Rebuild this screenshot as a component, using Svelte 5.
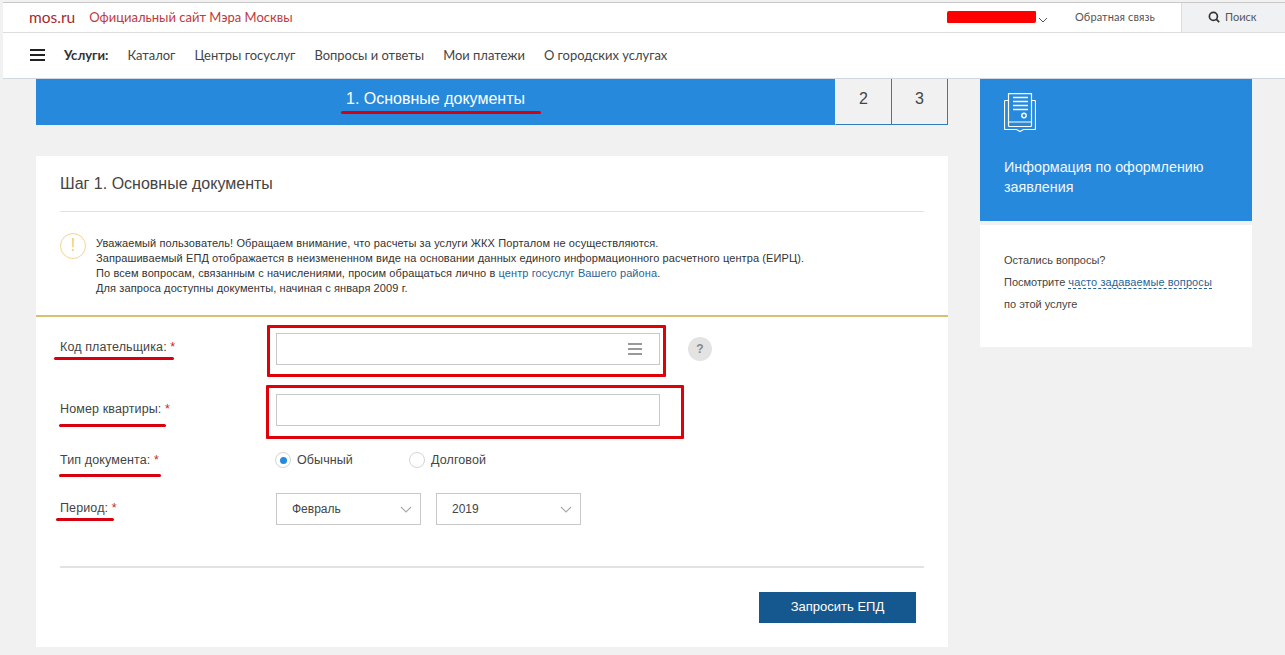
<script lang="ts">
  const navLinks = ['Каталог', 'Центры госуслуг', 'Вопросы и ответы', 'Мои платежи', 'О городских услугах'];

  // red marker strokes drawn over the page
  const strokes = [
    { x: 341, y: 111, w: 200, h: 3 },
    { x: 54, y: 357, w: 120, h: 3 },
    { x: 59, y: 424, w: 107, h: 3 },
    { x: 59, y: 474, w: 102, h: 3 },
    { x: 56, y: 518, w: 58, h: 3 },
  ];

  const boxes = [
    { x: 267, y: 325, w: 399, h: 52 },
    { x: 266, y: 385, w: 418, h: 54 },
  ];
</script>

<div class="page">
  <header class="top">
    <div class="top-left">
      <span class="logo">mos.ru</span>
      <span class="slogan">Официальный сайт Мэра Москвы</span>
    </div>
    <div class="top-right">
      <div class="user">
        <span class="scribble"></span>
        <svg width="10" height="6" viewBox="0 0 10 6"><path d="M1 1l4 4 4-4" fill="none" stroke="#555" stroke-width="1"/></svg>
      </div>
      <span class="feedback">Обратная связь</span>
      <div class="search">
        <svg width="12" height="12" viewBox="0 0 12 12"><circle cx="5.400" cy="5.400" r="4" fill="none" stroke="#333" stroke-width="1.700"/><path d="M8.200 8.200l3 3" stroke="#333" stroke-width="1.800"/></svg>
        <span>Поиск</span>
      </div>
    </div>
  </header>

  <nav class="nav">
    <div class="burger"><i></i><i></i><i></i></div>
    <b>Услуги:</b>
    {#each navLinks as link}
      <span>{link}</span>
    {/each}
  </nav>

  <div class="content">
    <main class="main">
      <div class="steps">
        <div class="step-active">1. Основные документы</div>
        <div class="step">2</div>
        <div class="step">3</div>
      </div>

      <section class="card">
        <h2>Шаг 1. Основные документы</h2>
        <div class="notice">
          <div class="excl">!</div>
          <p>
            Уважаемый пользователь! Обращаем внимание, что расчеты за услуги ЖКХ Порталом не осуществляются.<br />
            Запрашиваемый ЕПД отображается в неизмененном виде на основании данных единого информационного расчетного центра (ЕИРЦ).<br />
            По всем вопросам, связанным с начислениями, просим обращаться лично в <a href="#c">центр госуслуг Вашего района</a>.<br />
            Для запроса доступны документы, начиная с января 2009 г.
          </p>
        </div>

        <form class="form">
          <div class="row row-code">
            <span class="label">Код плательщика: <em>*</em></span>
            <div class="input">
              <div class="lines"><i></i><i></i><i></i></div>
            </div>
            <div class="help">?</div>
          </div>
          <div class="row row-flat">
            <span class="label">Номер квартиры: <em>*</em></span>
            <div class="input"></div>
          </div>
          <div class="row row-type">
            <span class="label">Тип документа: <em>*</em></span>
            <div class="radios">
              <span class="radio on"></span><span class="radio-text first">Обычный</span>
              <span class="radio"></span><span class="radio-text">Долговой</span>
            </div>
          </div>
          <div class="row row-period">
            <span class="label">Период: <em>*</em></span>
            <div class="selects">
              <div class="select month">Февраль
                <svg width="12" height="7" viewBox="0 0 12 7"><path d="M1 1l5 5 5-5" fill="none" stroke="#aaa" stroke-width="1.200"/></svg>
              </div>
              <div class="select year">2019
                <svg width="12" height="7" viewBox="0 0 12 7"><path d="M1 1l5 5 5-5" fill="none" stroke="#aaa" stroke-width="1.200"/></svg>
              </div>
            </div>
          </div>
        </form>

        <div class="actions">
          <div class="submit">Запросить ЕПД</div>
        </div>
      </section>
    </main>

    <aside class="side">
      <div class="side-blue">
        <svg class="doc" width="32" height="39" viewBox="0 0 32 39" fill="none" stroke="#fff" stroke-width="1.200">
          <path d="M4 7.500H1.500a1 1 0 0 0-1 1v27a1 1 0 0 0 1 1h11l3.500 2 3.500-2h11a1 1 0 0 0 1-1v-27a1 1 0 0 0-1-1H28" />
          <path d="M4.500 .6h23v28.400h-23z" />
          <path d="M4.500 29v3.500a1 1 0 0 0 1 1h21a1 1 0 0 0 1-1V29" />
          <path d="M9 4.500h15M9 8.500h15M9 12.500h15M9 16.500h15" stroke-width="1.400" />
          <circle cx="20" cy="22.500" r="2.200" stroke-width="1.400" />
        </svg>
        <div class="side-title">Информация по оформлению заявления</div>
      </div>
      <div class="side-white">
        <p>Остались вопросы?</p>
        <p>Посмотрите <a href="#q">часто задаваемые вопросы</a></p>
        <p>по этой услуге</p>
      </div>
    </aside>
  </div>

  {#each strokes as s}
    <span class="stroke" style="left:{s.x}px;top:{s.y}px;width:{s.w}px;height:{s.h}px"></span>
  {/each}
  {#each boxes as b}
    <span class="box" style="left:{b.x}px;top:{b.y}px;width:{b.w}px;height:{b.h}px"></span>
  {/each}
</div>

<style>
  :global(body) { margin: 0; background: #f1f1f1; }
  .page {
    position: relative;
    height: 655px;
    overflow: hidden;
    font-family: "Liberation Sans", Arial, sans-serif;
    color: #333;
    background: #f1f1f1;
    padding: 2px 0 0 3px;
    box-sizing: border-box;
  }

  .top {
    height: 31px;
    background: #fff;
    border-top: 1px solid #c8c8c8;
    border-bottom: 1px solid #ddd;
    display: flex;
    justify-content: space-between;
    box-sizing: border-box;
    font-family: Lato, sans-serif;
  }
  .top-left { display: flex; align-items: center; padding: 0 0 2px 26px; gap: 14px; }
  .logo { color: #a8282b; font-size: 15.500px; }
  .slogan { color: #c0393b; font-size: 13px; }
  .top-right { display: flex; align-items: center; }
  .user { display: flex; align-items: center; width: 128px; gap: 2px; margin-bottom: 2px; }
  .scribble { width: 89px; height: 12px; background: #f00; border-radius: 2px 1px; }
  .user svg { margin-top: 6px; }
  .feedback { font-size: 11px; color: #555; width: 106px; letter-spacing: 0.1px; margin-bottom: 2px; }
  .search {
    width: 104px;
    height: 100%;
    background: #f0f1f3;
    border-left: 1px solid #ddd;
    display: flex;
    align-items: center;
    gap: 5px;
    box-sizing: border-box;
    padding: 0 0 2px 26px;
    font-size: 11px;
    color: #555;
  }

  .nav {
    height: 46px;
    background: #fff;
    border-bottom: 1px solid #cfd8e0;
    display: flex;
    align-items: center;
    font-family: Lato, sans-serif;
    font-size: 12.950px;
    color: #444;
    gap: 19px;
    padding: 0 0 2px 27px;
    box-sizing: border-box;
  }
  .nav b { font-weight: 700; color: #333; font-size: 13px; }
  .burger { display: flex; flex-direction: column; gap: 3px; width: 15px; }
  .burger i { display: block; height: 2px; background: #222; }

  .content { display: flex; padding-left: 33px; }
  .main { width: 912px; }

  .steps { display: flex; height: 46px; }
  .step-active {
    width: 799px;
    background: #2789dc;
    color: #fff;
    font-size: 16px;
    display: flex;
    align-items: center;
    justify-content: center;
    padding-bottom: 6px;
    box-sizing: border-box;
  }
  .step {
    width: 56px;
    box-sizing: border-box;
    border-right: 1px solid #2e7cbd;
    border-bottom: 1px solid #2e7cbd;
    display: flex;
    align-items: center;
    justify-content: center;
    font-size: 16px;
    color: #444;
    padding-bottom: 5px;
  }
  .step:nth-child(2) { width: 57px; border-left: 1px solid #f1f1f1; }

  .card { background: #fff; margin-top: 31px; height: 491px; box-sizing: border-box; display: flex; flex-direction: column; }
  h2 {
    font-weight: 400;
    font-size: 16px;
    color: #444;
    margin: 0 24px;
    height: 55px;
    line-height: 55px;
    border-bottom: 1px solid #e2e2e2;
    flex: none;
  }
  .notice {
    display: flex;
    height: 105px;
    flex: none;
    border-bottom: 2px solid #d9bf75;
    box-sizing: border-box;
    padding: 21px 0 0 24px;
  }
  .excl {
    width: 26px;
    height: 26px;
    border: 1.500px solid #f5d48e;
    border-radius: 50%;
    box-sizing: border-box;
    color: #f3cd80;
    font-size: 18px;
    line-height: 22px;
    text-align: center;
    flex: none;
  }
  .notice p { margin: 3px 0 0 10px; font-size: 11px; line-height: 15px; color: #333; letter-spacing: 0.1px; }
  .notice a, .side-white a { color: #2a6496; text-decoration: none; }

  .form { display: flex; flex-direction: column; padding-left: 24px; height: 249px; flex: none; box-sizing: border-box; }
  .row { display: flex; align-items: center; }
  .label { width: 216px; font-size: 12.500px; letter-spacing: 0.12px; color: #444; flex: none; }
  .label em { color: #c8262b; font-style: normal; }
  .row-code { margin-top: 16px; }
  .row-code .label { padding-bottom: 4px; }
  .row-flat { margin-top: 29px; }
  .row-flat .label { padding-bottom: 2px; }
  .row-type { margin-top: 26px; }
  .row-period { margin-top: 25px; }
  .row-period .label { padding-bottom: 3px; }
  .input {
    width: 384px;
    height: 32px;
    border: 1px solid #c8c8c8;
    box-sizing: border-box;
    display: flex;
    align-items: center;
    justify-content: flex-end;
    padding-right: 17px;
  }
  .lines { display: flex; flex-direction: column; gap: 3px; width: 14px; }
  .lines i { display: block; height: 2px; background: #999; }
  .help {
    width: 24px;
    height: 24px;
    border-radius: 50%;
    background: #e3e3e3;
    color: #888;
    font-size: 12px;
    font-weight: 700;
    line-height: 24px;
    text-align: center;
    margin-left: 28px;
  }
  .radios { display: flex; align-items: center; font-size: 12.500px; letter-spacing: 0.1px; color: #444; height: 16px; margin-left: -1px; }
  .radio {
    width: 16px;
    height: 16px;
    border: 1px solid #d4d4d4;
    border-radius: 50%;
    box-sizing: border-box;
    flex: none;
    background: #fff;
    position: relative;
  }
  .radio.on::after {
    content: '';
    position: absolute;
    left: 3.500px;
    top: 3.500px;
    width: 7px;
    height: 7px;
    border-radius: 50%;
    background: #2789dc;
  }
  .radio-text { margin-left: 6px; }
  .radio-text.first { width: 56px; margin-right: 56px; flex: none; }
  .selects { display: flex; gap: 15px; }
  .select {
    height: 32px;
    border: 1px solid #c8c8c8;
    box-sizing: border-box;
    width: 145px;
    display: flex;
    align-items: center;
    justify-content: space-between;
    font-size: 12px;
    color: #444;
    padding: 0 8px 0 15px;
  }

  .actions {
    margin: 0 24px;
    border-top: 2px solid #e2e2e2;
    padding-top: 24px;
    display: flex;
    justify-content: flex-end;
    padding-right: 8px;
  }
  .submit {
    width: 157px;
    height: 31px;
    background: #15588f;
    color: #fff;
    font-size: 13px;
    line-height: 30px;
    text-align: center;
  }

  .side { width: 272px; margin-left: 32px; }
  .side-blue { background: #2789dc; height: 142px; color: #fff; padding: 14px 24px 0; box-sizing: border-box; }
  .doc { display: block; }
  .side-title { margin-top: 25px; font-size: 14.300px; line-height: 20px; color: #f2f8fd; }
  .side-white {
    background: #fff;
    margin-top: 4px;
    height: 122px;
    padding: 29px 24px 0;
    box-sizing: border-box;
    font-size: 11px;
    color: #444;
  }
  .side-white p { margin: 0 0 9.500px; line-height: 12.500px; }
  .side-white a { border-bottom: 1px dashed #2a6496; letter-spacing: 0.1px; }

  .stroke { position: absolute; background: #d6000e; border-radius: 2px; }
  .box { position: absolute; border: 3px solid #e00008; box-sizing: border-box; border-radius: 1px; }
</style>
